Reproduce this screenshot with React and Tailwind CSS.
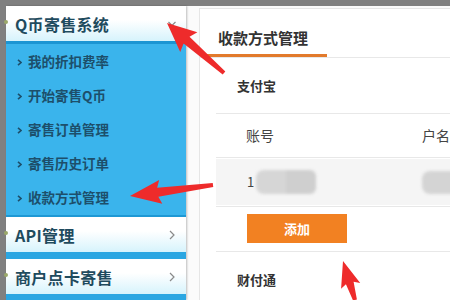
import React from 'react'

const font = { fontFamily: '"Noto Sans CJK SC", "Liberation Sans", sans-serif' }

const subItems = ['我的折扣费率', '开始寄售Q币', '寄售订单管理', '寄售历史订单', '收款方式管理']

// polygon for a red annotation arrow, tail -> tip
function arrowPoints([x1, y1], [x2, y2], headLen, headW, w0, w1) {
  const len = Math.hypot(x2 - x1, y2 - y1)
  const dx = (x2 - x1) / len
  const dy = (y2 - y1) / len
  const nx = -dy
  const ny = dx
  const bx = x2 - dx * headLen
  const by = y2 - dy * headLen
  const p = (x, y, s) => `${x + nx * s},${y + ny * s}`
  return [
    p(x1, y1, w0 / 2),
    p(bx, by, w1 / 2),
    p(bx - dx * 3, by - dy * 3, headW / 2),
    `${x2},${y2}`,
    p(bx - dx * 3, by - dy * 3, -headW / 2),
    p(bx, by, -w1 / 2),
    p(x1, y1, -w0 / 2)
  ].join(' ')
}

const Chevron = ({ down }) => (
  <svg width="8" height="10" viewBox="0 0 8 10" className="shrink-0">
    {down ? (
      <path d="M0.5 3 L4 6.5 L7.5 3" fill="none" stroke="#8a8a8a" strokeWidth="1.2" />
    ) : (
      <path d="M2 1 L6 5 L2 9" fill="none" stroke="#8a8a8a" strokeWidth="1.2" />
    )}
  </svg>
)

const Bullet = () => (
  <svg width="5" height="7" viewBox="0 0 5 7" className="shrink-0">
    <path d="M1 0.8 L4 3.5 L1 6.2" fill="none" stroke="#1d4f6b" strokeWidth="1.6" />
  </svg>
)

const MenuHeader = ({ title, down }) => (
  <div className="relative h-[35px] flex items-center justify-between pl-[9px] pr-[10px] bg-gradient-to-b from-white from-40% to-[#d6f3fc]">
    <span className="absolute left-[-2px] top-[14px] w-[4px] h-[4px] rounded-full bg-[#9aa86a]" />
    <span className="text-[16px] font-bold text-[#1f4b5e] leading-none tracking-[0.3px]">{title}</span>
    <Chevron down={down} />
  </div>
)

export default function App() {
  return (
    <div className="relative w-[450px] h-[300px] overflow-hidden bg-[#808080] pt-[6px] pl-[6px] flex" style={font}>
      {/* sidebar */}
      <div className="w-[180px] shrink-0 flex flex-col bg-[#2ea7e2] shadow-[1px_0_2px_rgba(0,0,0,0.25)] z-10">
        <div className="border-b-[3px] border-[#1b95d3]">
          <MenuHeader title="Q币寄售系统" down />
        </div>
        <div className="bg-[#3ab4ec] pt-[1px] h-[170px] border-b-[2px] border-[#1e98d4] box-content">
          {subItems.map((t) => (
            <div key={t} className="h-[34px] flex items-center gap-[6px] pl-[11px]">
              <Bullet />
              <span className="text-[13.5px] font-bold text-[#1d4f6b] leading-none">{t}</span>
            </div>
          ))}
        </div>
        <MenuHeader title="API管理" />
        <div className="h-[7px] bg-[#2aa6e2]" />
        <MenuHeader title="商户点卡寄售" />
        <div className="flex-1 bg-[#2aa6e2]" />
      </div>

      {/* main area */}
      <div className="flex-1 bg-[#fbfbfb] pl-[13px] pt-[2px]">
        <div className="h-full bg-white border-l border-t border-[#e6e6e6]">
          <div className="h-[49px] border-b border-[#e8e8e8] pl-[6px]">
            <div className="w-[121px] h-[48px] border-b-[3px] border-[#e27a2c] pl-[12px] pt-[19px]">
              <span className="block text-[15px] leading-[20px] font-bold text-[#333]">收款方式管理</span>
            </div>
          </div>

          <div className="h-[55px] flex items-center pl-[37px]">
            <span className="text-[13px] font-bold text-[#333]">支付宝</span>
          </div>

          <div className="ml-[16px]">
            <div className="h-[45px] border-t border-b border-[#e8e8e8] flex items-center text-[14px] text-[#444]">
              <span className="w-[206px] pl-[30px]">账号</span>
              <span>户名</span>
            </div>
            <div className="h-[49px] border-b border-[#e8e8e8] flex items-center">
              <div className="w-full h-[46px] bg-[#f5f5f5] flex items-center">
                <span className="w-[206px] pl-[31px] flex items-center text-[13px] text-[#444]">
                  1
                  <span className="ml-[2px] flex blur-[1.5px]">
                    <span className="w-[30px] h-[24px] bg-[#d6d6d6] rounded-l-[8px]" />
                    <span className="w-[30px] h-[24px] bg-[#cfcfcf] rounded-r-[6px]" />
                  </span>
                </span>
                <span className="flex blur-[1.5px]">
                  <span className="w-[40px] h-[23px] bg-[#d4d4d4] rounded-l-[8px]" />
                </span>
              </div>
            </div>
            <div className="h-[45px] border-b border-[#e8e8e8] pl-[31px] pt-[7px]">
              <div className="w-[100px] h-[29px] bg-[#f28122] flex items-center justify-center text-[13px] font-bold text-white">
                添加
              </div>
            </div>
          </div>

          <div className="h-[56px] flex items-center pl-[37px]">
            <span className="text-[13px] font-bold text-[#333]">财付通</span>
          </div>
        </div>
      </div>

      {/* red annotation arrows */}
      <svg className="absolute inset-0 z-20 pointer-events-none" width="450" height="300">
        <polygon fill="#ee2b2b" points={arrowPoints([224, 73], [167, 23], 26, 26, 4, 9)} />
        <polygon fill="#ee2b2b" points={arrowPoints([213, 185], [130, 196], 28, 24, 4, 9)} />
        <polygon fill="#ee2b2b" points={arrowPoints([355, 300], [343, 261], 23, 20, 4, 8)} />
      </svg>
    </div>
  )
}
